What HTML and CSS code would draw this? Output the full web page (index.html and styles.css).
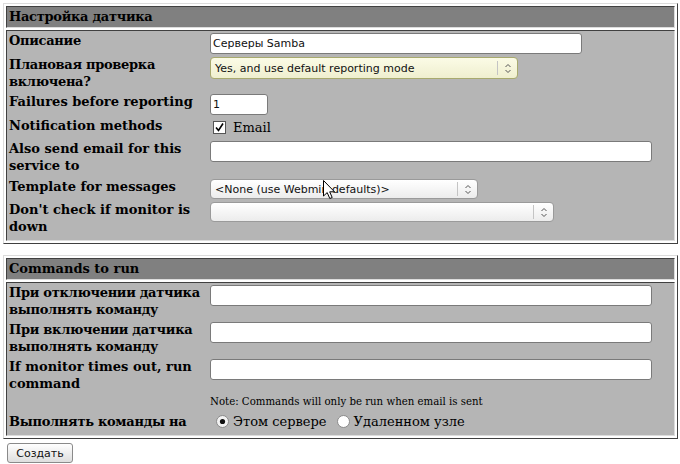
FILE: index.html
```html
<!DOCTYPE html>
<html lang="ru">
<head>
<meta charset="utf-8">
<title>Настройка датчика</title>
<link rel="stylesheet" href="styles.css">
</head>
<body>
<div class="panel">
  <div class="ph cy">Настройка датчика</div>
  <div class="pb">
    <div class="form">
      <div class="lbl cy">Описание</div>
      <div class="ctl"><input class="txt w372" type="text" value="Серверы Samba"></div>

      <div class="lbl cy">Плановая проверка включена?</div>
      <div class="ctl"><div class="sel hot w308"><span class="val">Yes, and use default reporting mode</span><span class="arr"><svg width="8" height="11" viewBox="0 0 8 11"><path d="M1.5 4 L4 1.5 L6.5 4 M1.5 7 L4 9.5 L6.5 7" fill="none" stroke="#555" stroke-width="1"/></svg></span></div></div>

      <div class="lbl">Failures before reporting</div>
      <div class="ctl"><input class="txt w58" type="text" value="1"></div>

      <div class="lbl">Notification methods</div>
      <div class="ctl chk"><svg class="box" width="13" height="13" viewBox="0 0 13 13"><rect x="0.5" y="0.5" width="12" height="12" fill="#fff" stroke="#555"/><path d="M3 6.5 L5.5 9.5 L10 2.5" fill="none" stroke="#000" stroke-width="1.6"/></svg><span class="opt">Email</span></div>

      <div class="lbl push2">Also send email for this service to</div>
      <div class="ctl push2"><input class="txt w442" type="text" value=""></div>

      <div class="lbl push1">Template for messages</div>
      <div class="ctl push1"><div class="sel w268"><span class="val">&lt;None (use Webmin defaults)&gt;</span><span class="arr"><svg width="8" height="11" viewBox="0 0 8 11"><path d="M1.5 4 L4 1.5 L6.5 4 M1.5 7 L4 9.5 L6.5 7" fill="none" stroke="#555" stroke-width="1"/></svg></span></div></div>

      <div class="lbl">Don't check if monitor is down</div>
      <div class="ctl"><div class="sel w344"><span class="val"></span><span class="arr"><svg width="8" height="11" viewBox="0 0 8 11"><path d="M1.5 4 L4 1.5 L6.5 4 M1.5 7 L4 9.5 L6.5 7" fill="none" stroke="#555" stroke-width="1"/></svg></span></div></div>
    </div>
  </div>
</div>

<div class="panel second">
  <div class="ph">Commands to run</div>
  <div class="pb">
    <div class="form">
      <div class="lbl cy">При отключении датчика выполнять команду</div>
      <div class="ctl"><input class="txt w442" type="text" value=""></div>

      <div class="lbl cy">При включении датчика выполнять команду</div>
      <div class="ctl"><input class="txt w442" type="text" value=""></div>

      <div class="lbl">If monitor times out, run command</div>
      <div class="ctl"><input class="txt w442" type="text" value=""></div>

      <div class="lbl"></div>
      <div class="ctl note">Note: Commands will only be run when email is sent</div>

      <div class="lbl cy push1">Выполнять команды на</div>
      <div class="ctl radios push1">
        <svg class="rad" width="13" height="13" viewBox="0 0 13 13"><circle cx="6.5" cy="6.5" r="6" fill="#f2f2f2" stroke="#8a8a8a"/><circle cx="6.5" cy="6.5" r="2.6" fill="#111"/></svg><span class="opt">Этом сервере</span>
        <svg class="rad" width="13" height="13" viewBox="0 0 13 13"><circle cx="6.5" cy="6.5" r="6" fill="#fff" stroke="#8a8a8a"/></svg><span class="opt">Удаленном узле</span>
      </div>
    </div>
  </div>
</div>

<div class="actions"><button class="btn" type="submit">Создать</button></div>

<svg class="cursor" width="13" height="20" viewBox="0 0 13 20"><path d="M0.5 0.5 L0.5 16 L4.2 12.6 L6.8 18.5 L9.2 17.5 L6.7 11.8 L11.5 11.8 Z" fill="#fff" stroke="#000" stroke-width="1"/></svg>
</body>
</html>
```
FILE: styles.css
```css
html, body { background: #fff; }
body {
  margin: 3px 2px 0 3px;
  font-family: "DejaVu Serif", serif;
  font-size: 13px;
  color: #000;
  position: relative;
}
.panel {
  border: 1px solid;
  border-color: #dcdcdc #404040 #404040 #dcdcdc;
  padding: 2px;
  display: flex;
  flex-direction: column;
  gap: 2px;
}
.panel.second { margin-top: 11px; }
.ph {
  border: 1px solid;
  border-color: #404040 #dcdcdc #dcdcdc #404040;
  background: #808080;
  font-weight: bold;
  line-height: 18px;
  padding: 1px 2px;
}
.cy { letter-spacing: -0.3px; }
.pb {
  border: 1px solid;
  border-color: #404040 #dcdcdc #dcdcdc #404040;
  background: #b5b5b5;
}
.form {
  display: grid;
  grid-template-columns: 203px 1fr;
  row-gap: 1px;
  padding: 0 0 4px 0;
}
.lbl {
  font-weight: bold;
  line-height: 17px;
  padding: 1px 2px;
}
.ctl {
  padding: 2px 0 0 0;
  display: flex;
  align-items: flex-start;
}
.push1 { margin-top: 1px; }
.push2 { margin-top: 2px; }
.txt {
  box-sizing: border-box;
  height: 21px;
  margin: 0;
  border: 1px solid #7a7a7a;
  border-radius: 3px;
  background: #fff;
  font-family: "DejaVu Sans", sans-serif;
  font-size: 11px;
  color: #111;
  padding: 0 2px;
  outline: none;
}
.w372 { width: 372px; }
.w308 { width: 308px; }
.w58 { width: 58px; }
.w442 { width: 442px; }
.w268 { width: 268px; }
.w344 { width: 344px; }
.sel {
  box-sizing: border-box;
  height: 20px;
  border: 1px solid #9a9a9a;
  border-radius: 4px;
  background: linear-gradient(#ffffff, #ececec);
  display: flex;
  align-items: center;
  font-family: "DejaVu Sans", sans-serif;
  font-size: 11px;
  color: #111;
}
.sel.hot {
  height: 22px;
  border-color: #a8aa6e;
  background: linear-gradient(#fbfbe6, #efefcf);
}
.sel .val {
  flex: 1;
  padding-left: 4px;
  white-space: nowrap;
  overflow: hidden;
}
.sel .arr {
  width: 19px;
  height: 14px;
  border-left: 1px solid #c4c4c4;
  display: flex;
  align-items: center;
  justify-content: center;
}
.chk { align-items: center; padding-top: 3px; }
.box { margin-left: 3px; flex: none; }
.opt { margin-left: 7px; line-height: 17px; }
.note {
  font-size: 10.2px;
  line-height: 14px;
  padding: 1px 0 1px 0;
}
.radios { align-items: center; padding-top: 0; }
.rad { margin-left: 6px; flex: none; }
.rad + .opt { margin-left: 4px; }
.opt + .rad { margin-left: 10px; }
.actions { padding: 4px 0 0 4px; }
.btn {
  height: 20px;
  width: 66px;
  border: 1px solid #8a8a8a;
  border-radius: 3px;
  background: linear-gradient(#ffffff, #dedede);
  font-family: "DejaVu Sans", sans-serif;
  font-size: 11px;
  color: #111;
  padding: 0;
}
.cursor {
  position: absolute;
  left: 320px;
  top: 177px;
}
```
